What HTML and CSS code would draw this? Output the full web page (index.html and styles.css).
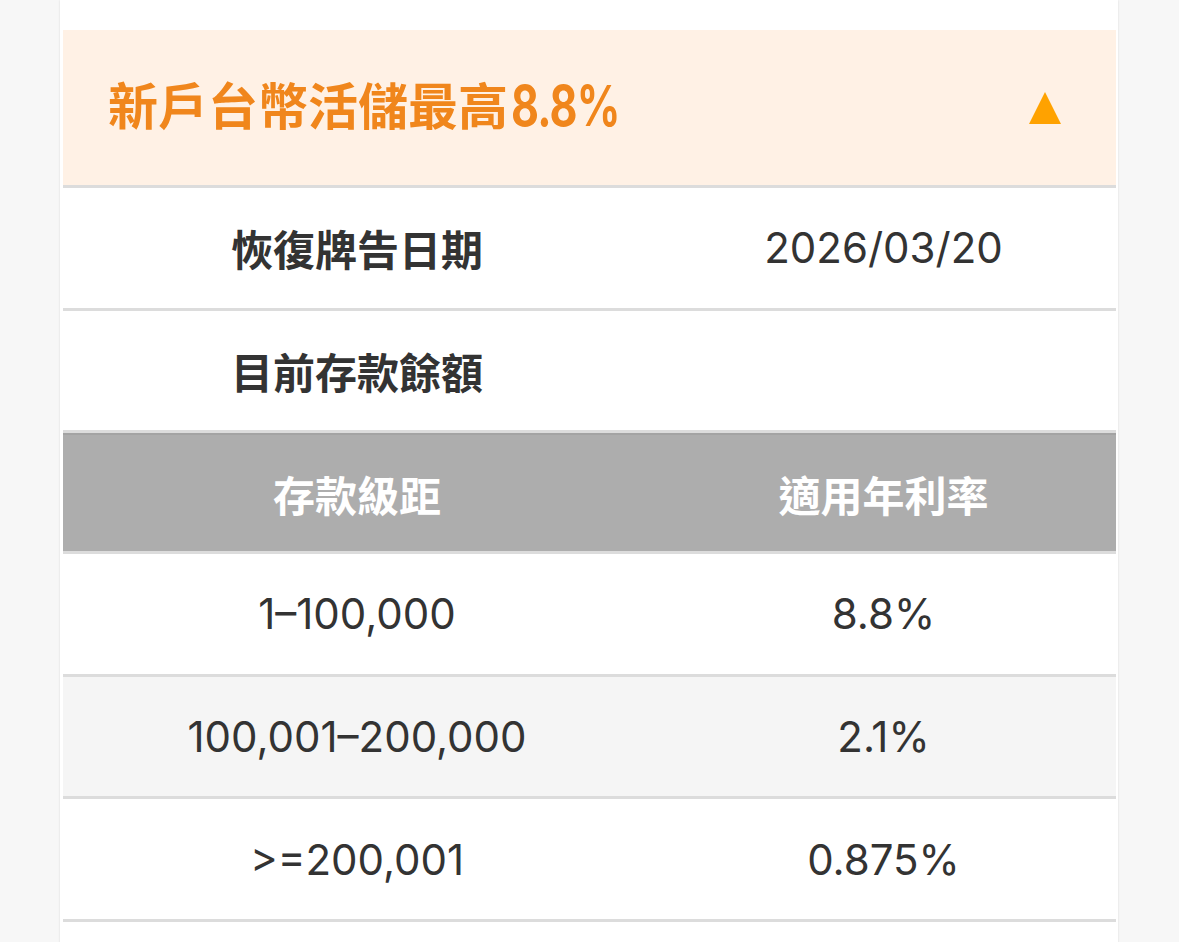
FILE: index.html
```html
<!DOCTYPE html>
<html lang="zh-Hant">
<head>
<meta charset="utf-8">
<link rel="stylesheet" href="styles.css">
</head>
<body>
<div class="card">
  <div class="head">
    <h1 class="title">新戶台幣活儲最高<span class="num">8.8%</span></h1>
    <svg class="arrow" width="34" height="34" viewBox="0 0 34 34" aria-hidden="true"><polygon points="17,1 33,33 1,33" fill="#ffa200"/></svg>
  </div>
  <div class="row">
    <div class="cell label">恢復牌告日期</div>
    <div class="cell value">2026/03/20</div>
  </div>
  <div class="row">
    <div class="cell label">目前存款餘額</div>
    <div class="cell value"></div>
  </div>
  <div class="row thead">
    <div class="cell th">存款級距</div>
    <div class="cell th">適用年利率</div>
  </div>
  <div class="row">
    <div class="cell value">1–100,000</div>
    <div class="cell value">8.8%</div>
  </div>
  <div class="row alt">
    <div class="cell value">100,001–200,000</div>
    <div class="cell value">2.1%</div>
  </div>
  <div class="row">
    <div class="cell value">&gt;=200,001</div>
    <div class="cell value">0.875%</div>
  </div>
</div>
</body>
</html>
```

FILE: styles.css
```css
html, body {
  margin: 0;
  padding: 0;
  background: #f7f7f7;
  height: 100%;
  overflow: hidden;
}
body {
  font-family: "Inter", "Noto Sans CJK TC", sans-serif;
  color: #333333;
}
.card {
  margin-left: 60px;
  width: 1053px;
  min-height: 942px;
  box-sizing: content-box;
  padding: 30px 2px 0 3px;
  background: #ffffff;
  box-shadow: 0 0 2px rgba(0, 0, 0, 0.12);
}
.head {
  height: 155px;
  background: #fff1e5;
  border-bottom: 3px solid #dcdcdc;
  display: flex;
  align-items: center;
  justify-content: space-between;
  padding: 0 54px 0 45px;
}
.title {
  margin: 0 0 10px 0;
  font-size: 50px;
  font-weight: 700;
  color: #f0861c;
  font-family: "Noto Sans CJK TC", sans-serif;
  letter-spacing: 0;
  white-space: nowrap;
}
.title .num {
  display: inline-block;
  font-family: "Inter", sans-serif;
  letter-spacing: -1px;
  transform: scale(0.86, 1.14);
  transform-origin: left 72%;
  margin-left: 3px;
}
.arrow {
  display: block;
  margin-top: 0;
}
.row {
  display: grid;
  grid-template-columns: 588px 1fr;
  height: 119.6px;
  border-bottom: 3px solid #dcdcdc;
}
.row.alt {
  background: #f5f5f5;
}
.row.thead {
  background: #adadad;
  border-top: 2px solid #a3a3a3;
  height: 116px;
}
.cell {
  display: flex;
  align-items: center;
  justify-content: center;
  font-size: 42px;
}
.label {
  font-weight: 700;
  font-family: "Noto Sans CJK TC", sans-serif;
  color: #333333;
}
.th {
  font-weight: 700;
  color: #ffffff;
  font-family: "Noto Sans CJK TC", sans-serif;
}
.value {
  font-weight: 400;
  color: #333333;
}
```
